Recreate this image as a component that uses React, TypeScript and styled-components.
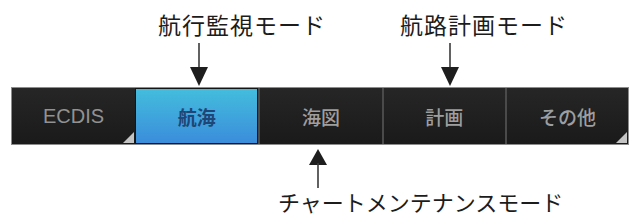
import { createGlobalStyle, styled } from "styled-components";

const GlobalStyle = createGlobalStyle`
  html, body {
    margin: 0;
    padding: 0;
    background: #ffffff;
  }
`;

const Page = styled.div`
  width: 635px;
  height: 220px;
  background: #ffffff;
  font-family: "Noto Sans CJK JP", "Noto Sans", sans-serif;
  color: #1c1c1c;
  overflow: hidden;
  padding-top: 11px;
  box-sizing: border-box;
`;

const TopNotes = styled.div`
  display: grid;
  grid-template-columns: 158px 242px auto;
  height: 76px;
`;

const Note = styled.div<{ $col: number }>`
  grid-column: ${(p) => p.$col};
  display: flex;
  flex-direction: column;
  align-items: flex-start;
`;

const Label = styled.span`
  font-size: 23px;
  line-height: 26px;
  white-space: nowrap;
  letter-spacing: 1px;
`;

const ArrowBox = styled.svg<{ $offset: number }>`
  display: block;
  margin-left: ${(p) => p.$offset}px;
  flex: none;
`;

const Bar = styled.div`
  display: grid;
  grid-template-columns: repeat(5, 1fr);
  width: 618px;
  height: 58px;
  margin-left: 11px;
  box-sizing: border-box;
  border: 1px solid #8c8c8c;
  background: #1c1c1c;
`;

const Cell = styled.div<{ $active?: boolean; $corner?: boolean; $first?: boolean }>`
  position: relative;
  display: flex;
  align-items: center;
  justify-content: center;
  box-sizing: border-box;
  font-size: 19px;
  font-weight: 500;
  color: #9e9e9e;
  background: linear-gradient(#262626, #1a1a1a);
  border-left: ${(p) => (p.$first ? "none" : "2px solid #4a4a4a")};

  ${(p) =>
    p.$active &&
    `
    background: linear-gradient(#43bddd, #3b8ddb);
    color: #1f4677;
    font-weight: 700;
    border: 1px solid #151515;
  `}

  ${(p) =>
    p.$corner &&
    `
    &::after {
      content: "";
      position: absolute;
      right: 1px;
      bottom: 1px;
      width: 0;
      height: 0;
      border-style: solid;
      border-width: 0 0 11px 11px;
      border-color: transparent transparent #c4c4c4 transparent;
    }
  `}
`;

const Latin = styled.span`
  font-family: "Liberation Sans", Arial, sans-serif;
  font-size: 20px;
  font-weight: 400;
  color: #929292;
`;

const BottomNote = styled.div`
  display: flex;
  flex-direction: column;
  align-items: flex-start;
  padding-left: 278px;
  margin-top: 4px;
`;

const BottomLabel = styled(Label)`
  font-size: 22px;
  letter-spacing: 0;
`;

function DownArrow({ offset }: { offset: number }) {
  return (
    <ArrowBox $offset={offset} width="20" height="43" viewBox="0 0 20 43" style={{ marginTop: 6 }}>
      <line x1="10" y1="0" x2="10" y2="26" stroke="#3a3a3a" strokeWidth="1.6" />
      <polygon points="1,24 19,24 10,43" fill="#1e1e1e" />
    </ArrowBox>
  );
}

function UpArrow({ offset }: { offset: number }) {
  return (
    <ArrowBox $offset={offset} width="20" height="39" viewBox="0 0 20 39">
      <polygon points="10,0 19,16 1,16" fill="#1e1e1e" />
      <line x1="10" y1="14" x2="10" y2="39" stroke="#3a3a3a" strokeWidth="1.6" />
    </ArrowBox>
  );
}

export default function App() {
  return (
    <>
      <GlobalStyle />
      <Page>
        <TopNotes>
          <Note $col={2}>
            <Label>航行監視モード</Label>
            <DownArrow offset={31} />
          </Note>
          <Note $col={3}>
            <Label>航路計画モード</Label>
            <DownArrow offset={40} />
          </Note>
        </TopNotes>
        <Bar>
          <Cell $first $corner>
            <Latin>ECDIS</Latin>
          </Cell>
          <Cell $active>航海</Cell>
          <Cell>海図</Cell>
          <Cell>計画</Cell>
          <Cell $corner>その他</Cell>
        </Bar>
        <BottomNote>
          <UpArrow offset={30} />
          <BottomLabel>チャートメンテナンスモード</BottomLabel>
        </BottomNote>
      </Page>
    </>
  );
}
